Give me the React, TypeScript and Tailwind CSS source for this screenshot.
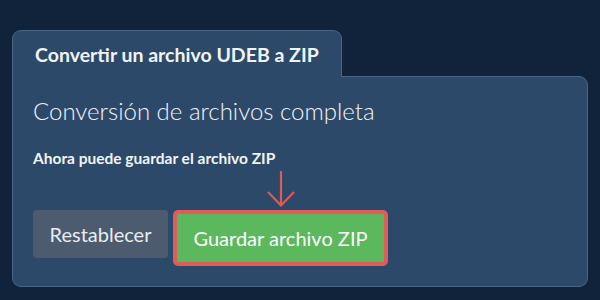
export default function App() {
  return (
    <div
      className="w-[600px] h-[300px] bg-[#10233a] pl-[12px] pt-[30px] text-[#f2f4f7]"
      style={{ fontFamily: "Lato, 'Noto Sans', sans-serif" }}
    >
      <div className="relative z-10 -mb-px w-[330px] h-[47px] rounded-t-[9px] border border-b-0 border-[#4b6585] bg-[#2d4969] pl-[22px] flex items-center">
        <span className="text-[19.5px] font-bold leading-none pt-[1px]">Convertir un archivo UDEB a ZIP</span>
      </div>
      <div className="w-[576px] h-[211px] rounded-b-[9px] rounded-tr-[9px] border border-[#4b6585] bg-[#2d4969] pl-[20px] pt-[19px]">
        <div className="text-[24px] font-light leading-[30px]">Conversión de archivos completa</div>
        <div className="mt-[22px] text-[15.5px] font-bold leading-[20px]">Ahora puede guardar el archivo ZIP</div>
        <div className="mt-[42px] flex items-start gap-[5px]">
          <button className="w-[135px] h-[48px] rounded-[4px] bg-[#4c5c6e] text-[20px] leading-none text-[#e9edf1]">
            Restablecer
          </button>
          <div className="relative">
            <svg
              className="absolute left-1/2 -translate-x-1/2 top-[-40px]"
              width="32"
              height="38"
              viewBox="0 0 32 38"
              fill="none"
              stroke="#e05a5a"
              strokeWidth="2.2"
            >
              <path d="M16 1 V36" />
              <path d="M3 22 L16 35.5 L29 22" />
            </svg>
            <div className="w-[215px] h-[56px] rounded-[5px] border-[4px] border-[#de5d5b] bg-[#5cb85c] flex items-center justify-center">
              <span className="text-[20px] leading-none text-white">Guardar archivo ZIP</span>
            </div>
          </div>
        </div>
      </div>
    </div>
  );
}
